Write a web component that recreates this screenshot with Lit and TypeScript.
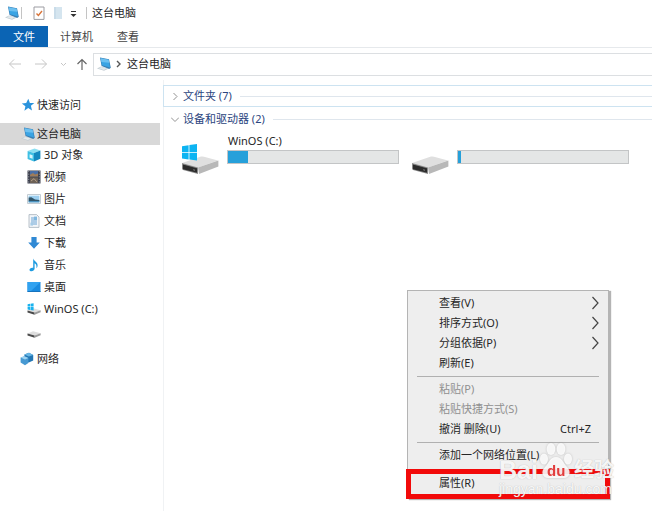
import { LitElement, html, css, svg, nothing, type TemplateResult } from "lit";
import { customElement } from "lit/decorators.js";
import { classMap } from "lit/directives/class-map.js";
import { styleMap } from "lit/directives/style-map.js";

const icon = (body: TemplateResult, w = 14, h = 14, box = `0 0 ${w} ${h}`) =>
  html`<svg width=${w} height=${h} viewBox=${box} aria-hidden="true">${body}</svg>`;

const pc = svg`
  <path d="M0 11.4 4 9.6 11.4 11.8 7 13.8Z" fill="#c3cdd3"/>
  <path d="M1.4 11.3 4.4 10 9.8 11.6 6.8 12.9Z" fill="#e3e9ec"/>
  <path d="M3 .6 12 2.2 13.8 10.8 12.2 12 4.6 9Z" fill="#3a7fb4"/>
  <path d="M3.6 1.2 11.6 2.7 13 10.6 5 8.2Z" fill="#3aa4e4"/>
  <path d="M3.6 1.2 11.6 2.7 12.2 5.8 4.4 5Z" fill="#6cc0f0"/>`;
const star = svg`<path d="M7.3.8 8.9 4.9 13.3 5 9.9 7.8 11 12.6 7.2 10 3.4 12.8 4.4 8.2.8 5.6 5.2 5.1Z" fill="#2b93dc"/>`;
const cube = svg`
  <path d="M.6 3 7.5.6 13.4 2.4 7 5Z" fill="#8ce0f2"/>
  <path d="M.6 3 7 5V13.6L.6 11Z" fill="#3fc0e4"/>
  <path d="M7 5 13.4 2.4V10.8L7 13.6Z" fill="#1489bf"/>
  <path d="M2.6 6.2 5.6 7.2V10.8L2.6 9.8Z" fill="#d9f6fc"/>`;
const video = svg`
  <path d="M.5.5H13.5V13.5H.5Z" fill="#3c3f4c"/>
  <path d="M3 1H11V6.4H3Z" fill="#4a6fa8"/><path d="M3 7.4H11V13H3Z" fill="#6d6156"/>
  <path d="M3 4.8 6 3 8 4.4 11 3.4V6.4H3Z" fill="#a07c58"/><path d="M4 11 7 8.6 9.8 11.8" fill="none" stroke="#b6a088"/>
  <path d="M1.7 1V13M12.3 1V13" stroke="#8d929c" stroke-dasharray="1.2 1.4"/>`;
const picture = svg`
  <path d="M.5 2.5H13.5V11.5H.5Z" fill="#fff" stroke="#c3ccd3"/>
  <path d="M1.6 3.6H12.4V10.4H1.6Z" fill="#9ccff0"/>
  <path d="M1.6 5.6 4.4 5.2 8 7.4 12.4 8V9.2H1.6Z" fill="#31566b"/><path d="M1.6 9H12.4V10.4H1.6Z" fill="#4b92be"/>`;
const doc = svg`
  <path d="M2 .6H9.6L12 3V13.4H2Z" fill="#f3f6f9" stroke="#a7b2bc" stroke-width=".8"/>
  <path d="M4 4H7M4 6H10M4 8H10M4 10H10" stroke="#6ba3d4"/><path d="M7 2.6H10V6H7Z" fill="#7eb7df"/>
  <path d="M3.4 8.6H6V11.6H3.4Z" fill="#a6cbe6"/>`;
const down = svg`<path d="M4.4 1H9.6V6.4H12.8L7 12.8 1.2 6.4H4.4Z" fill="#3089d4"/>`;
const music = svg`<path d="M6.2.4C7 3 10.8 4 10.6 7.4 10.5 8.8 10 9.6 9.4 10.2 9.8 7.6 9.2 6 7.6 5.2V10.8C7.4 12.6 5.6 13.4 4 13.2 2.4 13 2 11.4 3.2 10.4 4.2 9.6 5.4 9.6 6.2 9.8Z" fill="#1e9be0"/>`;
const desktop = svg`
  <path d="M.5 2H13.5V12H.5Z" fill="#1a8be0"/><path d="M.5 2H13.5L4 11H.5Z" fill="#31a2f0"/>
  <path d="M.5 11H13.5V12H.5Z" fill="#1673bd"/>`;
const smallDrive = svg`
  <path d="M.5 7.4 6 5.2 13.6 7.2 7.6 9.4Z" fill="#dedede"/>
  <path d="M.5 7.4 7.6 9.4V11.8L.5 9.6Z" fill="#4a4a4a"/><path d="M7.6 9.4 13.6 7.2V9.2L7.6 11.8Z" fill="#9b9b9b"/>`;
const osDrive = svg`
  <g transform="translate(0 1)">${smallDrive}</g>
  <path d="M.6 2.2 3 1.8V4.6H.6ZM3.5 1.7 6.6 1.2V4.6H3.5ZM.6 5.1H3V7.9L.6 7.5ZM3.5 5.1H6.6V8.5L3.5 8Z" fill="#19b2ee"/>`;
const network = svg`
  <path d="M4.4 2.6 9 .8 13.2 3V8.4L8.8 10.6 4.4 8.4Z" fill="#2477b4"/>
  <path d="M4.4 2.6 9 .8 13.2 3 8.8 4.6Z" fill="#68b7e6"/>
  <path d="M.6 5.4 4.4 4.2 8.4 6V11L5 13.2.6 10.6Z" fill="#4799d2"/>
  <path d="M.6 5.4 4.4 4.2 8.4 6 5 7.4Z" fill="#9dd4f2"/>`;
const bigDriveBody = svg`
  <path d="M1 21 20 14.6Q21.5 14.2 23 14.8L37 18.6 17 25.6Z" fill="#dfdfdf"/>
  <path d="M1 21 17 25.6V32L2 28Q1 27.6 1 26.6Z" fill="#8a8a8a"/>
  <path d="M2 22.4 16 26.2V30.8L2 27.2Z" fill="#2c2c2c"/>
  <path d="M17 25.6 37.4 18.6V24.6L18 32Z" fill="#b8b8b8"/>
  <path d="M12.4 27.8 13.8 28.2" stroke="#999"/>`;
const bigOs = svg`${bigDriveBody}
  <path d="M1 4.2 7.6 3.2V10H1ZM8.4 3.1 16 2V10H8.4ZM1 10.8H7.6V17.4L1 16.4ZM8.4 10.8H16V18.6L8.4 17.5Z" fill="#0db4f2"/>`;
const sheet = svg`
  <path d="M1 1H11V13.4H1Z" fill="#fff" stroke="#9c9ca2"/>
  <path d="M3.5 7.4 5.4 9.4 9 5" fill="none" stroke="#d8743a" stroke-width="1.4"/>`;
const folder = svg`<path d="M2 1H10V13H2Z" fill="#d5e5ef"/><path d="M2 1H4V13H2Z" fill="#c9dce9"/>`;

const places = [
  { label: "3D 对象", pic: cube },
  { label: "视频", pic: video },
  { label: "图片", pic: picture },
  { label: "文档", pic: doc },
  { label: "下载", pic: down },
  { label: "音乐", pic: music },
  { label: "桌面", pic: desktop },
  { label: "WinOS (C:)", pic: osDrive },
  { label: "", pic: smallDrive },
];

const drives = [
  { name: "WinOS (C:)", used: 12, pic: bigOs },
  { name: "", used: 2, pic: bigDriveBody },
];

interface Command {
  label: string;
  sub?: boolean;
  off?: boolean;
  keys?: string;
}
const commands: Command[][] = [
  [
    { label: "查看(V)", sub: true },
    { label: "排序方式(O)", sub: true },
    { label: "分组依据(P)", sub: true },
    { label: "刷新(E)" },
  ],
  [
    { label: "粘贴(P)", off: true },
    { label: "粘贴快捷方式(S)", off: true },
    { label: "撤消 删除(U)", keys: "Ctrl+Z" },
  ],
  [{ label: "添加一个网络位置(L)" }],
];

@customElement("app-root")
export class AppRoot extends LitElement {
  static styles = css`
    :host {
      display: flex;
      flex-direction: column;
      position: relative;
      min-height: 100vh;
      overflow: hidden;
      background: #fff;
      color: #262626;
      font: 11px/16px "Noto Sans", "Noto Sans CJK SC", sans-serif;
    }
    * { box-sizing: border-box; }
    svg { display: block; flex: none; }
    button, a {
      font: inherit;
      color: inherit;
      border: 0;
      margin: 0;
      padding: 0;
      background: none;
      text-decoration: none;
      white-space: nowrap;
    }
    h1, h2, ul { margin: 0; padding: 0; font: inherit; list-style: none; }
    .title { display: flex; align-items: center; height: 26px; padding-left: 5px; }
    .title .bar { width: 1px; height: 12px; background: #c4c4c4; }
    .title .bar.first { margin: 0 11px 0 2px; }
    .title .quick { margin-right: 7px; }
    .title .bar.last { margin: 0 5px 0 9px; }
    .tabs { display: flex; height: 22px; border-bottom: 1px solid #e6e9ec; color: #444; }
    .tabs button { padding: 0 12px; }
    .tabs .file { width: 48px; background: #0b64b4; color: #fff; }
    .nav { display: flex; align-items: center; height: 32px; padding-left: 8px; color: #c6c6c6; }
    .nav .forward { margin-left: 14px; }
    .nav .recent { margin-left: 12px; }
    .nav .up { margin-left: 9px; color: #666; }
    .address {
      display: flex;
      align-items: center;
      flex: 1;
      gap: 5px;
      height: 23px;
      margin-left: 5px;
      padding-left: 3px;
      border: 1px solid #dcdfe2;
      border-right: 0;
      color: #262626;
    }
    .address svg { color: #555; }
    .body { display: flex; flex: 1; }
    .tree { width: 164px; flex: none; padding: 14px 3px 0 0; border-right: 1px solid #f0f2f4; }
    .tree a { display: flex; align-items: center; gap: 2px; height: 22px; padding-left: 21px; }
    .tree .here { margin-top: 7px; background: #d8d8d8; }
    .tree ul { margin-top: -1px; }
    .tree ul a { gap: 3px; padding-left: 27px; }
    .tree ul a.bare { height: 26px; }
    .tree .net { padding-left: 20px; gap: 3px; margin-top: 2px; }
    .main { flex: 1; min-width: 0; padding-top: 5px; }
    .group { display: flex; align-items: center; height: 22px; padding-left: 6px; border: 1px solid transparent; border-right: 0; color: #2b4580; }
    .group::after { content: ""; flex: 1; height: 1px; margin-left: 8px; background: #dfe6ed; }
    .group button { display: flex; align-items: center; gap: 4px; }
    .group svg { color: #929292; }
    .group.closed { border-color: #cde3f1; margin: 0 0 1px -1px; padding-left: 7px; }
    .drives { display: grid; grid-template-columns: repeat(auto-fill, 230px); padding: 3px 0 0 17px; }
    .drive { display: flex; gap: 7px; }
    .drive svg { margin-top: 9px; }
    .info { width: 172px; }
    .name { height: 17px; padding-left: 1px; }
    .meter { height: 14px; border: 1px solid #c3c5c6; background: #e4e6e6; }
    .fill { height: 100%; background: #26a0da; }
    .menu {
      position: absolute;
      left: 407px;
      top: 290px;
      width: 202px;
      padding: 2px 0 0;
      border: 1px solid #b4b4b4;
      border-bottom: 0;
      background: #eee;
      box-shadow: 2px 1px 1px #b4b4b4;
    }
    .menu button { display: flex; align-items: center; width: 100%; height: 20px; padding: 0 9px 0 31px; }
    .menu button[disabled] { color: #909090; }
    .menu span { margin-left: auto; }
    .menu svg { margin-left: auto; color: #444; }
    .menu .keys { margin-right: 8px; }
    .menu hr { height: 1px; margin: 3px 9px 2px; border: 0; background: #b0b0b0; }
    .menu .props { width: 204px; height: 30px; margin: 4px 0 0 -2px; padding: 0 0 2px 28px; border: 5px solid #f20a0a; }
    .mark {
      position: absolute;
      left: 499px;
      top: 441px;
      color: rgba(255, 255, 255, 0.9);
      pointer-events: none;
      text-shadow: 0 0 1px rgba(150, 150, 150, 0.7);
    }
    .brand { display: flex; align-items: flex-end; gap: 1px; height: 38px; font: 700 25px/18px "Liberation Sans", "Noto Sans CJK SC", sans-serif; }
    .brand .cn { font-size: 20px; }
    .paw { filter: drop-shadow(0 0 1px rgba(150, 150, 150, 0.6)); }
    .paw text { font: 700 15px "Liberation Sans", sans-serif; fill: #e23c3c; text-shadow: none; }
    .site { font: 14px/20px "Liberation Sans", sans-serif; }
  `;

  private arrow(d: string, w: number, h: number, stroke = 1) {
    return icon(svg`<path d=${d} fill="none" stroke="currentColor" stroke-width=${stroke}/>`, w, h);
  }

  private command(c: Command) {
    return html`<button role="menuitem" ?disabled=${!!c.off}>
      ${c.label}
      ${c.sub ? this.arrow("M1.5 1 7 7 1.5 13", 8, 14, 1.2) : nothing}
      ${c.keys ? html`<span class="keys">${c.keys}</span>` : nothing}
    </button>`;
  }

  render() {
    return html`
      <header class="title">
        ${icon(pc)}
        <i class="bar first"></i>
        <button class="quick" aria-label="属性">${icon(sheet, 12, 14)}</button>
        <button class="quick" aria-label="新建文件夹">${icon(folder, 11, 14)}</button>
        <button aria-label="自定义">${icon(svg`<path d="M1 3.5H6" stroke="#333"/><path d="M.5 6H6.5L3.5 9Z" fill="#333"/>`, 7, 10)}</button>
        <i class="bar last"></i>
        <h1>这台电脑</h1>
      </header>
      <nav class="tabs">
        <button class="file">文件</button>
        <button>计算机</button>
        <button>查看</button>
      </nav>
      <div class="nav">
        <button class="back" aria-label="后退">${this.arrow("M6 1.5 1.5 6 6 10.5M1.5 6H13", 13, 12)}</button>
        <button class="forward" aria-label="前进">${this.arrow("M7 1.5 11.5 6 7 10.5M11.5 6H0", 13, 12)}</button>
        <button class="recent" aria-label="最近">${this.arrow("M1 1 3.5 3.5 6 1", 7, 5)}</button>
        <button class="up" aria-label="上移">${this.arrow("M1.5 6 6 1.5 10.5 6M6 1.5V12", 12, 12, 1.2)}</button>
        <div class="address">
          ${icon(pc)} ${this.arrow("M1 1 4 4 1 7", 6, 8, 1.4)}
          <a href="#pc">这台电脑</a>
        </div>
      </div>
      <div class="body">
        <nav class="tree">
          <a href="#quick">${icon(star)}快速访问</a>
          <a href="#pc" class="here">${icon(pc)}这台电脑</a>
          <ul>
            ${places.map(
              (p) => html`<li>
                <a href="#place" class=${classMap({ bare: !p.label })} aria-label=${p.label || "驱动器"}>${icon(p.pic)}${p.label}</a>
              </li>`
            )}
          </ul>
          <a href="#net" class="net">${icon(network)}网络</a>
        </nav>
        <main class="main">
          <h2 class="group closed">
            <button>${this.arrow("M2.5 1 6 4.5 2.5 8", 8, 9)}文件夹 (7)</button>
          </h2>
          <h2 class="group">
            <button>${this.arrow("M0 2.5 4 6.5 8 2.5", 8, 9)}设备和驱动器 (2)</button>
          </h2>
          <div class="drives">
            ${drives.map(
              (d) => html`<div class="drive">
                ${icon(d.pic, 39, 33)}
                <div class="info">
                  <div class="name">${d.name}</div>
                  <div class="meter"><div class="fill" style=${styleMap({ width: `${d.used}%` })}></div></div>
                </div>
              </div>`
            )}
          </div>
        </main>
      </div>
      <div class="menu" role="menu">
        ${commands.map((g, i) => html`${i ? html`<hr />` : nothing}${g.map((c) => this.command(c))}`)}
        <button class="props" role="menuitem">属性(R)</button>
      </div>
      <div class="mark">
        <div class="brand">
          Bai
          <svg class="paw" width="34" height="38" viewBox="0 0 34 38">
            <g fill="#fff" fill-opacity=".85">
              <ellipse cx="5" cy="18" rx="4" ry="5.5"/><ellipse cx="12" cy="8" rx="4.4" ry="6"/>
              <ellipse cx="22" cy="8" rx="4.4" ry="6"/><ellipse cx="29" cy="18" rx="4" ry="5.5"/>
              <path d="M17 16C23 16 24 22 28 26 33 31 30 37 25 37 21 37 13 37 9 37 4 37 1 31 6 26 10 22 11 16 17 16Z"/>
            </g>
            <text x="8" y="35">du</text>
          </svg>
          <span class="cn">经验</span>
        </div>
        <div class="site">jingyan.baidu.com</div>
      </div>
    `;
  }
}
